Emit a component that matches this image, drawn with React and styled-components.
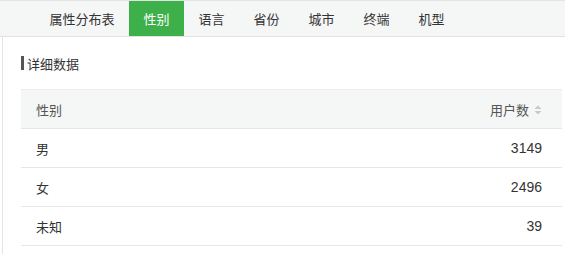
import styled, { createGlobalStyle } from 'styled-components';

const GlobalStyle = createGlobalStyle`
  html, body {
    margin: 0;
    padding: 0;
    background: #ffffff;
    font-family: "Noto Sans CJK SC", "Liberation Sans", sans-serif;
  }
`;

const tabs = ['属性分布表', '性别', '语言', '省份', '城市', '终端', '机型'];

const rows = [
  { name: '男', count: 3149 },
  { name: '女', count: 2496 },
  { name: '未知', count: 39 },
];

function SortIcon() {
  return (
    <svg width="8" height="10" viewBox="0 0 8 10">
      <path d="M4 0.5 L7.5 4 H0.5 Z" fill="#c8c8c8" />
      <path d="M4 9.5 L7.5 6 H0.5 Z" fill="#c8c8c8" />
    </svg>
  );
}

function App() {
  return (
    <>
      <GlobalStyle />
      <Page>
        <TabBar>
          {tabs.map((t, i) => (
            <Tab key={t} $active={i === 1}>{t}</Tab>
          ))}
        </TabBar>
        <Panel>
          <SectionTitle>详细数据</SectionTitle>
          <Table>
            <HeadRow>
              <Cell>性别</Cell>
              <NumCell>
                用户数
                <SortIcon />
              </NumCell>
            </HeadRow>
            {rows.map((r) => (
              <Row key={r.name}>
                <Cell>{r.name}</Cell>
                <NumCell $pad>{r.count}</NumCell>
              </Row>
            ))}
          </Table>
        </Panel>
      </Page>
    </>
  );
}

const Page = styled.div`
  width: 565px;
  height: 254px;
  overflow: hidden;
  background: #ffffff;
`;

const TabBar = styled.div`
  display: flex;
  height: 35px;
  padding-left: 35px;
  background: #f5f6f6;
  border-top: 1px solid #e4e4e4;
  border-bottom: 1px solid #e2e2e2;
`;

const Tab = styled.div`
  padding: 0 14.5px;
  line-height: 35px;
  font-size: 13px;
  color: ${(p) => (p.$active ? '#ffffff' : '#333333')};
  background: ${(p) => (p.$active ? '#3db049' : 'transparent')};
`;

const Panel = styled.div`
  margin-left: 2px;
  height: 217px;
  border-left: 1px solid #e4e4e4;
  padding: 14px 3px 0 18px;
`;

const SectionTitle = styled.div`
  display: flex;
  align-items: center;
  font-size: 13px;
  color: #333333;
  height: 24px;
  margin-bottom: 14px;
  &::before {
    content: '';
    width: 3px;
    height: 14px;
    background: #555555;
    margin-right: 3px;
  }
`;

const Table = styled.div`
  display: flex;
  flex-direction: column;
`;

const Row = styled.div`
  display: flex;
  align-items: center;
  justify-content: space-between;
  height: 38px;
  border-bottom: 1px solid #e6e6e6;
  padding: 0 20px 0 15px;
  font-size: 13px;
  color: #333333;
`;

const HeadRow = styled(Row)`
  background: #f5f6f6;
  border-top: 1px solid #eeeeee;
  color: #555555;
  height: 38px;
`;

const Cell = styled.div``;

const NumCell = styled.div`
  display: flex;
  align-items: center;
  gap: 5px;
  font-family: "Liberation Sans", "Noto Sans CJK SC", sans-serif;
  font-size: ${(p) => (p.$pad ? '14px' : '13px')};
  & > svg {
    margin-top: 1px;
  }
`;

export default App;
